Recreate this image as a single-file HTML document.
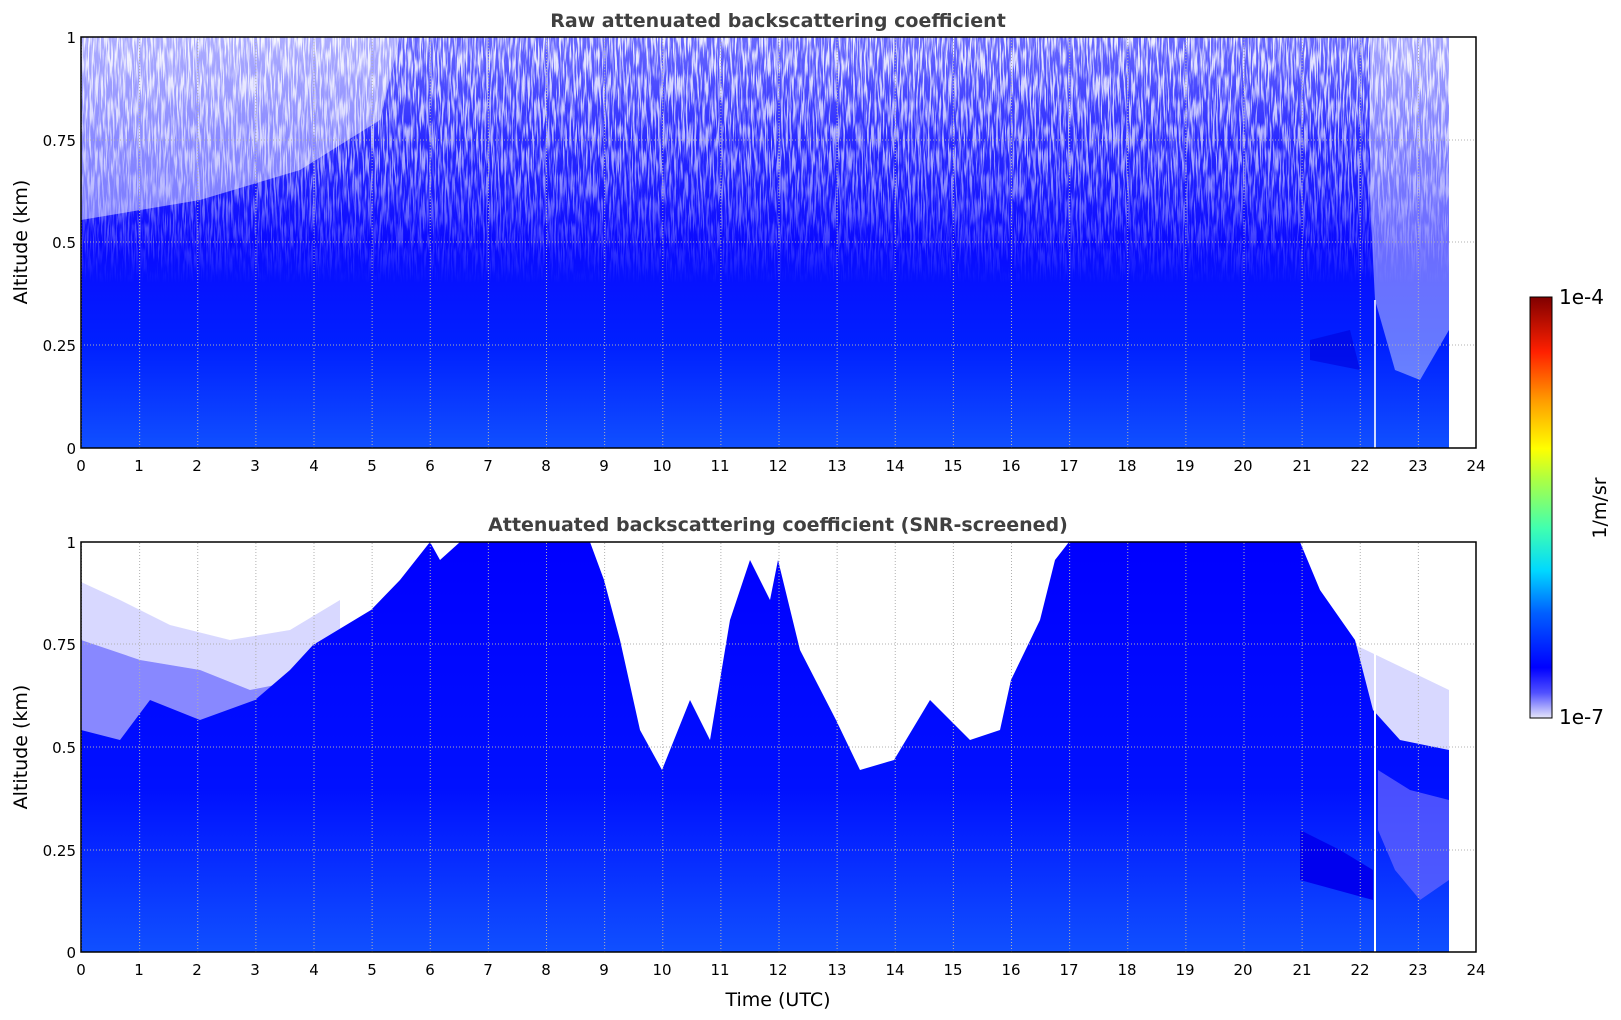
<!DOCTYPE html>
<html><head><meta charset="utf-8"><style>
html,body{margin:0;padding:0;background:#fff;width:1621px;height:1020px;overflow:hidden}
svg{display:block}
text{font-family:"DejaVu Sans","Liberation Sans",sans-serif;fill:#000}
</style></head><body>
<svg width="1621" height="1020" viewBox="0 0 1621 1020" xmlns="http://www.w3.org/2000/svg">
<defs>
<linearGradient id="tg" x1="0" y1="0" x2="0" y2="1">
<stop offset="0" stop-color="#6a6aff"/>
<stop offset="0.25" stop-color="#2a2aff"/>
<stop offset="0.5" stop-color="#0a0aff"/>
<stop offset="0.75" stop-color="#0020ff"/>
<stop offset="0.9" stop-color="#0a3cff"/>
<stop offset="1" stop-color="#1050ff"/>
</linearGradient>
<linearGradient id="bg" x1="0" y1="0" x2="0" y2="1">
<stop offset="0" stop-color="#0000ff"/>
<stop offset="0.6" stop-color="#0010ff"/>
<stop offset="0.85" stop-color="#0a38ff"/>
<stop offset="1" stop-color="#1050ff"/>
</linearGradient>
<linearGradient id="mg" x1="0" y1="0" x2="0" y2="1">
<stop offset="0" stop-color="#fff" stop-opacity="0.9"/>
<stop offset="0.3" stop-color="#fff" stop-opacity="0.6"/>
<stop offset="0.6" stop-color="#fff" stop-opacity="0"/>
</linearGradient>
<mask id="mk"><rect x="81" y="37" width="1368" height="411" fill="url(#mg)"/></mask>
<filter id="nz" x="0" y="0" width="1" height="1">
<feTurbulence type="fractalNoise" baseFrequency="0.6 0.04" numOctaves="2" seed="7"/>
<feColorMatrix type="matrix" values="0 0 0 0 1  0 0 0 0 1  0 0 0 0 1  5 0 0 0 -2.2"/>
</filter>
<linearGradient id="cb" x1="0" y1="1" x2="0" y2="0">
<stop offset="0" stop-color="#e6e6fa"/>
<stop offset="0.06" stop-color="#5050ff"/>
<stop offset="0.12" stop-color="#0000ff"/>
<stop offset="0.25" stop-color="#0060ff"/>
<stop offset="0.35" stop-color="#00d8ff"/>
<stop offset="0.45" stop-color="#40ffb0"/>
<stop offset="0.57" stop-color="#b0ff40"/>
<stop offset="0.64" stop-color="#ffff00"/>
<stop offset="0.75" stop-color="#ffa000"/>
<stop offset="0.87" stop-color="#ff2000"/>
<stop offset="1" stop-color="#800000"/>
</linearGradient>
<pattern id="vg" x="81" y="0" width="58.125" height="1020" patternUnits="userSpaceOnUse">
<line x1="0.5" y1="0" x2="0.5" y2="1020" stroke="#b0b0b0" stroke-width="1" stroke-dasharray="1,2"/>
</pattern>
</defs>

<!-- TOP PLOT -->
<rect x="81" y="37" width="1368" height="411" fill="url(#tg)"/>
<g mask="url(#mk)"><rect x="81" y="37" width="1368" height="411" filter="url(#nz)"/></g>
<polygon fill="#fff" opacity="0.45" points="81,37 400,37 380,120 300,170 200,200 81,220"/>
<polygon fill="#fff" opacity="0.4" points="1370,37 1449,37 1449,330 1420,380 1395,370 1375,300 1370,200"/>
<polygon fill="#0000dd" opacity="0.6" points="1310,340 1350,330 1360,370 1310,360"/>
<rect x="1374" y="300" width="2" height="148" fill="#fff" opacity="0.8"/>
<rect x="81" y="37" width="1395" height="411" fill="url(#vg)"/>
<g stroke="#b0b0b0" stroke-dasharray="1,2"><line x1="81" y1="140" x2="1476" y2="140"/><line x1="81" y1="242" x2="1476" y2="242"/><line x1="81" y1="345" x2="1476" y2="345"/></g>
<rect x="81" y="37" width="1395" height="411" fill="none" stroke="#000" stroke-width="1.5"/>

<!-- BOTTOM PLOT -->
<polygon fill="#d8d8ff" points="81,582 120,600 170,625 230,640 290,630 340,600 340,952 81,952"/>
<polygon fill="#8888ff" points="81,640 140,660 200,670 250,690 300,680 340,650 340,952 81,952"/>
<polygon fill="#d8d8ff" points="1345,640 1449,690 1449,952 1345,952"/>
<polygon fill="url(#bg)" points="81,730 120,740 150,700 200,720 255,700 290,670 313,645 371,610 400,580 430,542 440,560 460,542 590,542 604,580 620,640 640,730 662,770 690,700 710,740 730,620 750,560 770,600 778,560 800,650 836,720 860,770 894,760 930,700 970,740 1000,730 1011,680 1040,620 1055,560 1069,542 1300,542 1320,590 1355,640 1373,710 1400,740 1449,750 1449,952 81,952"/>
<polygon fill="#6a6aff" opacity="0.7" points="1378,770 1410,790 1449,800 1449,880 1420,900 1395,870 1378,830"/>
<polygon fill="#0000ee" points="1300,830 1340,850 1373,870 1373,900 1300,880"/>
<rect x="1374" y="542" width="2" height="410" fill="#fff"/>
<rect x="81" y="542" width="1395" height="410" fill="url(#vg)"/>
<g stroke="#b0b0b0" stroke-dasharray="1,2"><line x1="81" y1="644" x2="1476" y2="644"/><line x1="81" y1="747" x2="1476" y2="747"/><line x1="81" y1="850" x2="1476" y2="850"/></g>
<rect x="81" y="542" width="1395" height="410" fill="none" stroke="#000" stroke-width="1.5"/>

<!-- titles -->
<text x="778" y="27" text-anchor="middle" font-size="19" font-weight="bold" style="fill:#404040">Raw attenuated backscattering coefficient</text>
<text x="778" y="531" text-anchor="middle" font-size="19" font-weight="bold" style="fill:#404040">Attenuated backscattering coefficient (SNR-screened)</text>
<text transform="translate(27,242) rotate(-90)" text-anchor="middle" font-size="19">Altitude (km)</text>
<text transform="translate(27,747) rotate(-90)" text-anchor="middle" font-size="19">Altitude (km)</text>
<text x="778" y="1006" text-anchor="middle" font-size="19">Time (UTC)</text>

<g font-size="15" text-anchor="end">
<text x="76" y="43">1</text><text x="76" y="146">0.75</text><text x="76" y="248">0.5</text><text x="76" y="351">0.25</text><text x="76" y="454">0</text>
<text x="76" y="548">1</text><text x="76" y="650">0.75</text><text x="76" y="753">0.5</text><text x="76" y="856">0.25</text><text x="76" y="958">0</text>
</g>
<g font-size="15" text-anchor="middle">
<g transform="translate(0,471)">
<text x="81">0</text><text x="139">1</text><text x="197">2</text><text x="255">3</text><text x="314">4</text><text x="372">5</text><text x="430">6</text><text x="488">7</text><text x="546">8</text><text x="604">9</text><text x="662">10</text><text x="720">11</text><text x="778">12</text><text x="837">13</text><text x="895">14</text><text x="953">15</text><text x="1011">16</text><text x="1069">17</text><text x="1127">18</text><text x="1185">19</text><text x="1243">20</text><text x="1302">21</text><text x="1360">22</text><text x="1418">23</text><text x="1476">24</text>
</g>
<g transform="translate(0,975)">
<text x="81">0</text><text x="139">1</text><text x="197">2</text><text x="255">3</text><text x="314">4</text><text x="372">5</text><text x="430">6</text><text x="488">7</text><text x="546">8</text><text x="604">9</text><text x="662">10</text><text x="720">11</text><text x="778">12</text><text x="837">13</text><text x="895">14</text><text x="953">15</text><text x="1011">16</text><text x="1069">17</text><text x="1127">18</text><text x="1185">19</text><text x="1243">20</text><text x="1302">21</text><text x="1360">22</text><text x="1418">23</text><text x="1476">24</text>
</g>
</g>

<rect x="1530" y="297" width="22" height="421" fill="url(#cb)" stroke="#000" stroke-width="1"/>
<text x="1559" y="304" font-size="20">1e-4</text>
<text x="1559" y="724" font-size="20">1e-7</text>
<text transform="translate(1606,508) rotate(-90)" text-anchor="middle" font-size="19">1/m/sr</text>
</svg>
</body></html>
